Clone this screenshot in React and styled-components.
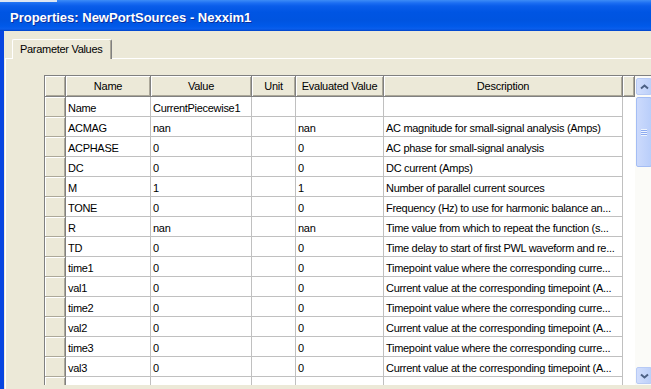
import React from 'react';
import styled, { createGlobalStyle } from 'styled-components';

const GlobalStyle = createGlobalStyle`
    html, body {
        margin: 0;
        padding: 0;
        background: #ECE9D8;
    }
    body {
        width: 651px;
        height: 389px;
        overflow: hidden;
        font-family: "Liberation Sans", Arial, sans-serif;
    }
`;

const columns = [
    { title: 'Name', w: 85 },
    { title: 'Value', w: 101 },
    { title: 'Unit', w: 44 },
    { title: 'Evaluated Value', w: 88 },
    { title: 'Description', w: 239 },
];

const rows = [
    ['Name', 'CurrentPiecewise1', '', '', ''],
    ['ACMAG', 'nan', '', 'nan', 'AC magnitude for small-signal analysis (Amps)'],
    ['ACPHASE', '0', '', '0', 'AC phase for small-signal analysis'],
    ['DC', '0', '', '0', 'DC current (Amps)'],
    ['M', '1', '', '1', 'Number of parallel current sources'],
    ['TONE', '0', '', '0', 'Frequency (Hz) to use for harmonic balance an...'],
    ['R', 'nan', '', 'nan', 'Time value from which to repeat the function (s...'],
    ['TD', '0', '', '0', 'Time delay to start of first PWL waveform and re...'],
    ['time1', '0', '', '0', 'Timepoint value where the corresponding curre...'],
    ['val1', '0', '', '0', 'Current value at the corresponding timepoint (A...'],
    ['time2', '0', '', '0', 'Timepoint value where the corresponding curre...'],
    ['val2', '0', '', '0', 'Current value at the corresponding timepoint (A...'],
    ['time3', '0', '', '0', 'Timepoint value where the corresponding curre...'],
    ['val3', '0', '', '0', 'Current value at the corresponding timepoint (A...'],
    ['', '', '', '', ''],
];

const Arrow = ({ down }) => (
    <svg width="9" height="6" viewBox="0 0 9 6">
        <polyline
            points={down ? '1,1.5 4.5,4.5 8,1.5' : '1,4.5 4.5,1.5 8,4.5'}
            fill="none"
            stroke="#4D6185"
            strokeWidth="2"
        />
    </svg>
);

export default function App() {
    return (
        <Window>
            <GlobalStyle />
            <TitleBar>
                <Title>Properties: NewPortSources - Nexxim1</Title>
            </TitleBar>
            <Body>
                <TabStrip>
                    <TabEdge $w={7} />
                    <Tab>Parameter Values</Tab>
                    <TabEdge $grow />
                </TabStrip>
                <Panel>
                    <Grid>
                        <Sheet>
                            <HeaderRow>
                                <CornerCell />
                                {columns.map((c) => (
                                    <HeadCell key={c.title} $w={c.w}>{c.title}</HeadCell>
                                ))}
                                <HeadCell $w={12} />
                            </HeaderRow>
                            {rows.map((r, i) => (
                                <Row key={i}>
                                    <RowHead />
                                    {columns.map((c, j) => (
                                        <Cell key={c.title} $w={c.w}>{r[j]}</Cell>
                                    ))}
                                </Row>
                            ))}
                        </Sheet>
                        <ScrollBar>
                            <ScrollButton><Arrow /></ScrollButton>
                            <Thumb>
                                <Grip />
                            </Thumb>
                            <Track />
                            <ScrollButton><Arrow down /></ScrollButton>
                        </ScrollBar>
                    </Grid>
                </Panel>
            </Body>
        </Window>
    );
}

const Window = styled.div`
    width: 651px;
    height: 389px;
    display: flex;
    flex-direction: column;
    overflow: hidden;
    background: #ECE9D8;
`;

// top-left strip is the desktop peeking past the window corner
const TitleBar = styled.div`
    height: 31px;
    flex-shrink: 0;
    box-sizing: border-box;
    padding: 8px 0 0 10px;
    background:
        linear-gradient(#DDE5F2, #DDE5F2) 0 0 / 57px 2px no-repeat,
        linear-gradient(to bottom,
            #3D8CF6 0px, #1C6EF2 3px, #0A5DEA 6px, #0055E3 12px,
            #0054E0 20px, #0059E9 26px, #0A5EEC 29px, #0043C8 31px);
`;

const Title = styled.div`
    color: #fff;
    font-weight: bold;
    font-size: 13px;
    line-height: 20px;
    white-space: nowrap;
    text-shadow: 1px 1px 0 #0A2E9C;
`;

const Body = styled.div`
    flex: 1;
    display: flex;
    flex-direction: column;
    border-left: 4px solid #0846E0;
    padding-top: 8px;
    min-height: 0;
`;

const TabStrip = styled.div`
    display: flex;
    height: 20px;
    flex-shrink: 0;
`;

const TabEdge = styled.div`
    width: ${(p) => (p.$w ? `${p.$w}px` : 'auto')};
    flex: ${(p) => (p.$grow ? 1 : 'none')};
    margin-left: ${(p) => (p.$grow ? 0 : '1px')};
    border-bottom: 1px solid #fff;
`;

const Tab = styled.div`
    width: 100px;
    box-sizing: border-box;
    border: 1px solid #fff;
    border-right-color: #808080;
    border-bottom: none;
    border-radius: 2px 2px 0 0;
    box-shadow: inset -1px 0 0 #ACA899;
    font-size: 11px;
    letter-spacing: -0.3px;
    line-height: 18px;
    padding-left: 7px;
    color: #000;
    white-space: nowrap;
`;

const Panel = styled.div`
    flex: 1;
    margin-left: 1px;
    border-left: 1px solid #fff;
    padding: 16px 0 0 38px;
    min-height: 0;
`;

const Grid = styled.div`
    display: flex;
    height: 310px;
    box-sizing: border-box;
    border-top: 1px solid #808080;
    border-left: 1px solid #808080;
    overflow: hidden;
`;

const Sheet = styled.div`
    width: 590px;
    flex-shrink: 0;
    display: flex;
    flex-direction: column;
    background: #fff;
    overflow: hidden;
`;

const HeaderRow = styled.div`
    display: flex;
    height: 21px;
    flex-shrink: 0;
`;

const CornerCell = styled.div`
    width: 21px;
    box-sizing: border-box;
    background: #ECE9D8;
    border-right: 1px solid #808080;
    border-bottom: 1px solid #808080;
    box-shadow: inset 1px 1px 0 #fff, inset -1px -1px 0 #ACA899;
`;

const HeadCell = styled.div`
    width: ${(p) => p.$w}px;
    box-sizing: border-box;
    background: #ECE9D8;
    border-right: 1px solid #808080;
    border-bottom: 1px solid #808080;
    box-shadow: inset 1px 1px 0 #fff, inset -1px -1px 0 #ACA899;
    font-size: 11px;
    letter-spacing: -0.25px;
    line-height: 20px;
    text-align: center;
    white-space: nowrap;
    overflow: hidden;
    color: #000;
`;

const Row = styled.div`
    display: flex;
    height: 20px;
    flex-shrink: 0;
`;

const RowHead = styled.div`
    width: 21px;
    box-sizing: border-box;
    background: #ECE9D8;
    border-right: 1px solid #808080;
    border-bottom: 1px solid #ACA899;
    box-shadow: inset 1px 1px 0 #fff, inset -1px 0 0 #ACA899;
`;

const Cell = styled.div`
    width: ${(p) => p.$w}px;
    box-sizing: border-box;
    border-right: 1px solid #C0C0C0;
    border-bottom: 1px solid #C0C0C0;
    padding: 1px 0 0 2px;
    font-size: 11px;
    letter-spacing: -0.3px;
    line-height: 20px;
    white-space: nowrap;
    overflow: hidden;
    color: #000;
`;

const ScrollBar = styled.div`
    width: 17px;
    flex-shrink: 0;
    display: flex;
    flex-direction: column;
    box-sizing: border-box;
    padding: 2px 0 1px 1px;
    background: #FBFBF8;
`;

const ScrollButton = styled.div`
    height: 17px;
    flex-shrink: 0;
    display: flex;
    align-items: center;
    justify-content: center;
    box-sizing: border-box;
    border: 1px solid #B7CAF5;
    border-radius: 2px;
    background: linear-gradient(to right, #D2DEFD, #BCD0F9);
`;

const Thumb = styled.div`
    height: 70px;
    flex-shrink: 0;
    margin-top: 2px;
    display: flex;
    align-items: center;
    justify-content: center;
    box-sizing: border-box;
    border: 1px solid #A4BDF4;
    border-radius: 2px;
    background: linear-gradient(to right, #CCDAFC, #B9CEFA);
`;

const Grip = styled.div`
    width: 6px;
    height: 7px;
    background: repeating-linear-gradient(to bottom,
        #EEF4FE 0px, #EEF4FE 1px, #8DAAF0 1px, #8DAAF0 2px);
`;

const Track = styled.div`
    flex: 1;
`;
